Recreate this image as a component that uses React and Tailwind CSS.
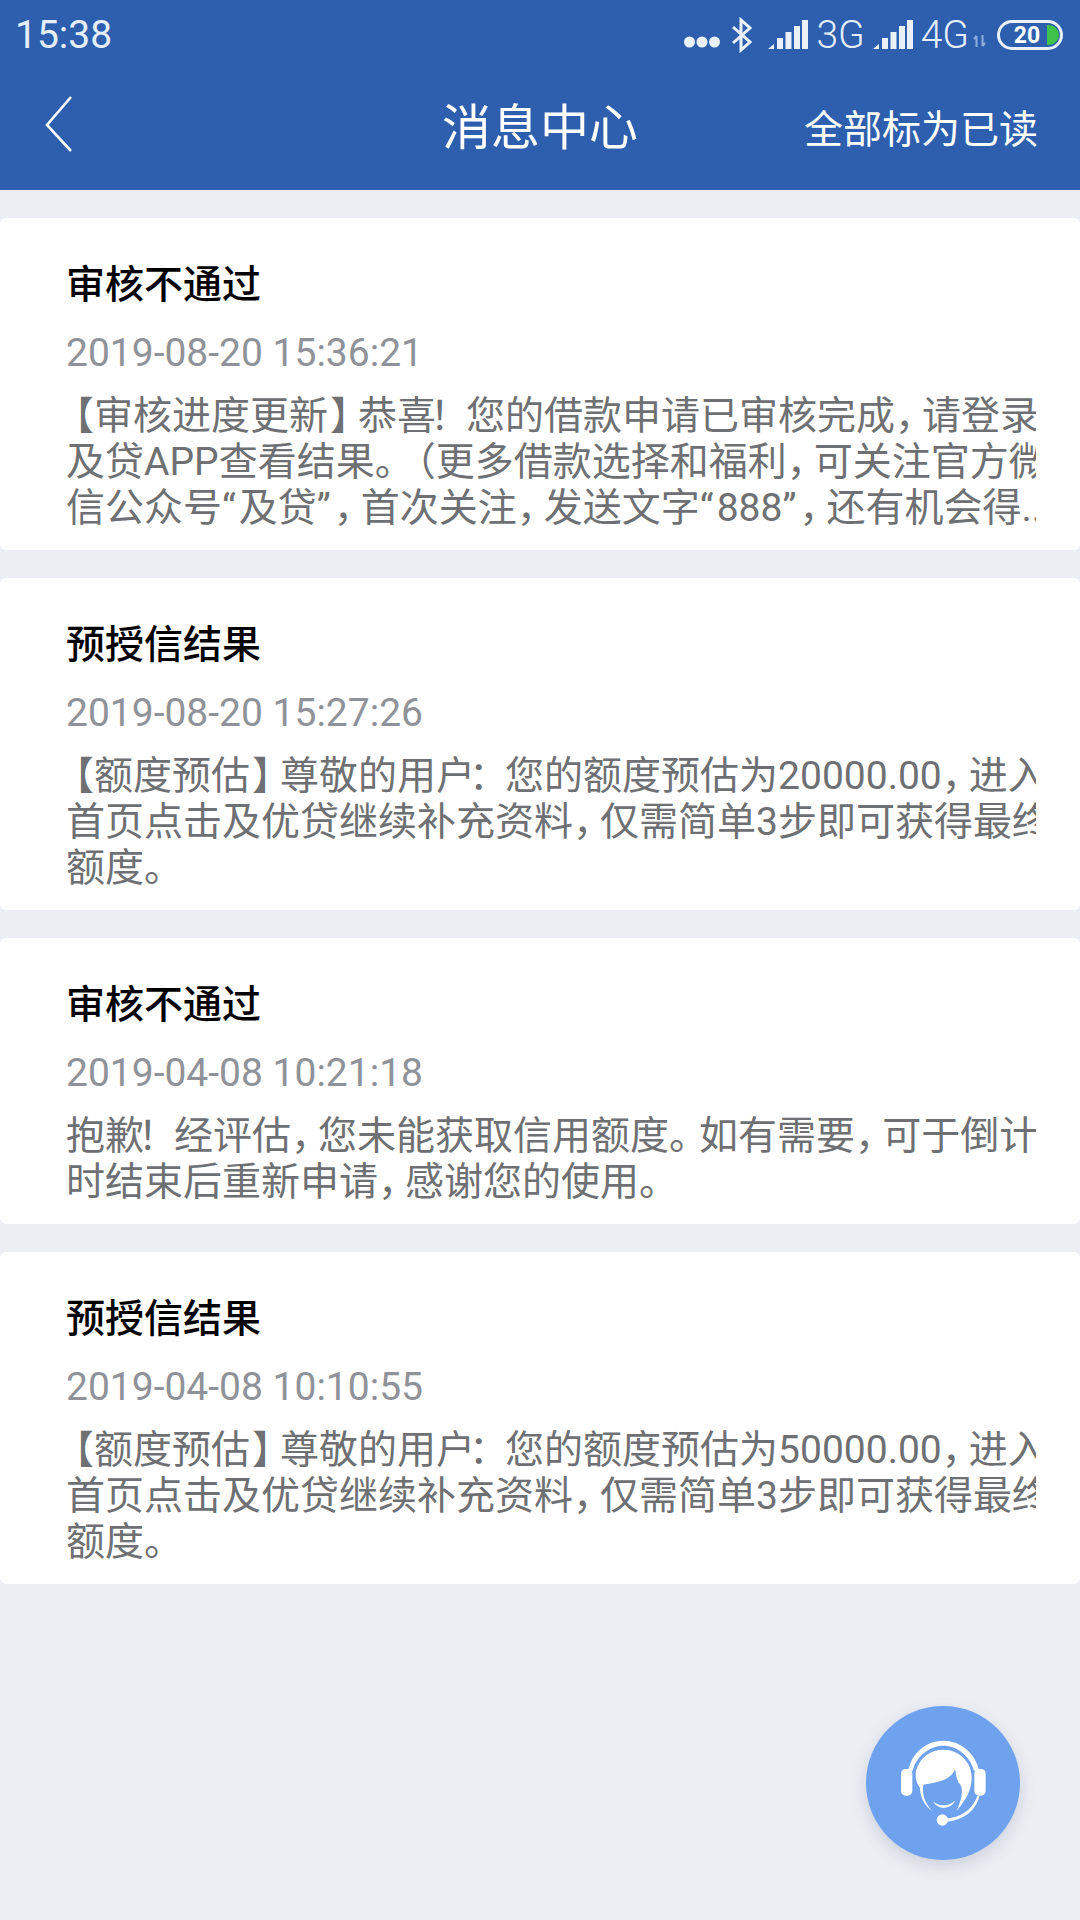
import React from "react";

const font = { fontFamily: "Roboto, 'Noto Sans CJK SC', sans-serif" };

const cards = [
  {
    title: "审核不通过",
    date: "2019-08-20 15:36:21",
    lines: [
      "【审核进度更新】恭喜！您的借款申请已审核完成，请登录",
      "及贷APP查看结果。（更多借款选择和福利，可关注官方微",
      "信公众号“及贷”，首次关注，发送文字“888”，还有机会得...",
    ],
  },
  {
    title: "预授信结果",
    date: "2019-08-20 15:27:26",
    lines: [
      "【额度预估】尊敬的用户：您的额度预估为20000.00，进入",
      "首页点击及优贷继续补充资料，仅需简单3步即可获得最终",
      "额度。",
    ],
  },
  {
    title: "审核不通过",
    date: "2019-04-08 10:21:18",
    lines: [
      "抱歉！经评估，您未能获取信用额度。如有需要，可于倒计",
      "时结束后重新申请，感谢您的使用。",
    ],
  },
  {
    title: "预授信结果",
    date: "2019-04-08 10:10:55",
    lines: [
      "【额度预估】尊敬的用户：您的额度预估为50000.00，进入",
      "首页点击及优贷继续补充资料，仅需简单3步即可获得最终",
      "额度。",
    ],
  },
];

// The reference font sets CJK punctuation narrower than a full em.
function Line({ text }) {
  const parts = text.split(/([【】（，。！：“”])/);
  return (
    <div className="whitespace-nowrap [text-spacing-trim:space-all]">
      {parts.map((p, i) => {
        if (p === "【") return <span key={i} className="ml-[-11px]">{p}</span>;
        if (p === "（") return <span key={i} className="ml-[-8px]">{p}</span>;
        if (p === "】") return <span key={i} className="ml-[2px] tracking-[-11px]">{p}</span>;
        if (p === "，") return <span key={i} className="tracking-[-12px]">{p}</span>;
        if (p === "。") return <span key={i} className="tracking-[-9px]">{p}</span>;
        if (p === "！" || p === "：") return <span key={i} className="ml-[-6px] tracking-[-3px]">{p}</span>;
        if (p === "“" || p === "”") return <span key={i} className="tracking-[3px]">{p}</span>;
        return <span key={i}>{p}</span>;
      })}
    </div>
  );
}

function Signal() {
  return (
    <svg width="40" height="30" viewBox="0 0 40 30" fill="#eaf1fb" className="block">
      <path d="M0 29 L6 24 V29 Z" />
      <rect x="9" y="18" width="6" height="11" />
      <rect x="17.5" y="12" width="6" height="17" />
      <rect x="26" y="6" width="6" height="23" />
      <rect x="34" y="0" width="6" height="29" />
    </svg>
  );
}

function Card({ c }) {
  return (
    <div className="bg-white rounded-[6px] pl-[66px] pr-[44px] pt-[44px] pb-[19px]">
      <div className="text-[39px] leading-[46px] font-medium text-black">{c.title}</div>
      <div className="mt-[22px] text-[39px] leading-[46px] text-[#8f9298]">{c.date}</div>
      <div className="mt-[17px] overflow-hidden text-[39px] leading-[46px] text-[#6e7073]">
        {c.lines.map((l, i) => (
          <Line key={i} text={l} />
        ))}
      </div>
    </div>
  );
}

export default function App() {
  return (
    <div className="relative w-[1080px] h-[1920px] bg-[#eceef3] overflow-hidden" style={font}>
      <div className="h-[190px] bg-[#2d5fae] text-white">
        <div className="h-[70px] flex items-center justify-between pl-[15px] pr-[17px]">
          <span className="text-[39px] leading-none text-[#e6eefa]">15:38</span>
          <div className="flex items-center text-[#e6eefa]">
            <svg width="36" height="12" viewBox="0 0 36 12" fill="#eaf1fb" className="mt-[14px]">
              <circle cx="5.5" cy="6" r="5.5" />
              <circle cx="18" cy="6" r="5.5" />
              <circle cx="30.5" cy="6" r="5.5" />
            </svg>
            <svg width="24" height="36" viewBox="0 0 24 36" fill="none" stroke="#eaf1fb" strokeWidth="3" className="ml-[10px]">
              <path d="M3 10 L20 25 L11 33 V3 L20 11 L3 26" />
            </svg>
            <span className="ml-[14px]"><Signal /></span>
            <span className="ml-[8px] text-[39px] leading-none font-light">3G</span>
            <span className="ml-[8px]"><Signal /></span>
            <span className="ml-[8px] text-[39px] leading-none font-light">4G</span>
            <svg width="13" height="12" viewBox="0 0 13 12" fill="none" stroke="#8fb0dc" strokeWidth="2" className="ml-[4px] mt-[12px]">
              <path d="M3.5 12 V1 M1 4 L3.5 1 M9.5 0 V11 M12 8 L9.5 11" />
            </svg>
            <div className="ml-[11px] relative w-[66px] h-[30px] rounded-full border-[3px] border-[#eaf1fb] flex items-center justify-center">
              <span className="text-[23px] leading-none font-bold text-white mr-[6px]">20</span>
              <span className="absolute right-[1px] top-[2px] w-[12px] h-[20px] bg-[#3fc24a] rounded-r-full" />
            </div>
          </div>
        </div>
        <div className="relative h-[120px] flex items-center justify-between">
          <svg width="30" height="58" viewBox="0 0 30 58" fill="none" stroke="white" strokeWidth="2.6" className="ml-[44px] mb-[12px]">
            <path d="M27 2 L3 30 L27 56" />
          </svg>
          <span className="absolute left-0 right-0 top-[31px] text-center text-[49px] leading-[56px]">消息中心</span>
          <span className="mr-[42px] text-[39px] leading-[46px]">全部标为已读</span>
        </div>
      </div>
      <div className="pt-[28px] flex flex-col gap-[28px]">
        {cards.map((c, i) => (
          <Card key={i} c={c} />
        ))}
      </div>
      <div className="absolute left-[866px] top-[1706px] w-[154px] h-[154px] rounded-full bg-[#6ea2ee] shadow-[0_6px_16px_rgba(60,80,120,0.18)] flex items-center justify-center">
        <svg width="85" height="87" viewBox="183 178 255 261" fill="white">
          <path d="M205 270 C215 215 260 180 310 180 C360 180 405 215 418 270 L402 270 C390 225 350 195 310 195 C270 195 230 225 218 270 Z" />
          <rect x="183" y="265" width="34" height="80" rx="14" />
          <rect x="403" y="265" width="34" height="80" rx="14" />
          <path d="M240 322 C228 305 225 290 228 270 C240 230 270 207 310 207 C355 207 392 240 395 285 C396 320 385 350 350 390 C368 350 372 320 355 305 C350 295 348 280 345 265 C335 295 300 305 250 312 C245 340 255 370 278 392 C255 378 240 350 240 322 Z" />
          <path d="M280 363 C300 378 325 378 345 360 C335 385 295 390 280 363 Z" />
          <path d="M305 413 C350 415 395 395 412 345 L418 347 C405 400 355 425 305 424 Z" />
          <circle cx="307" cy="418" r="17" />
        </svg>
      </div>
    </div>
  );
}
